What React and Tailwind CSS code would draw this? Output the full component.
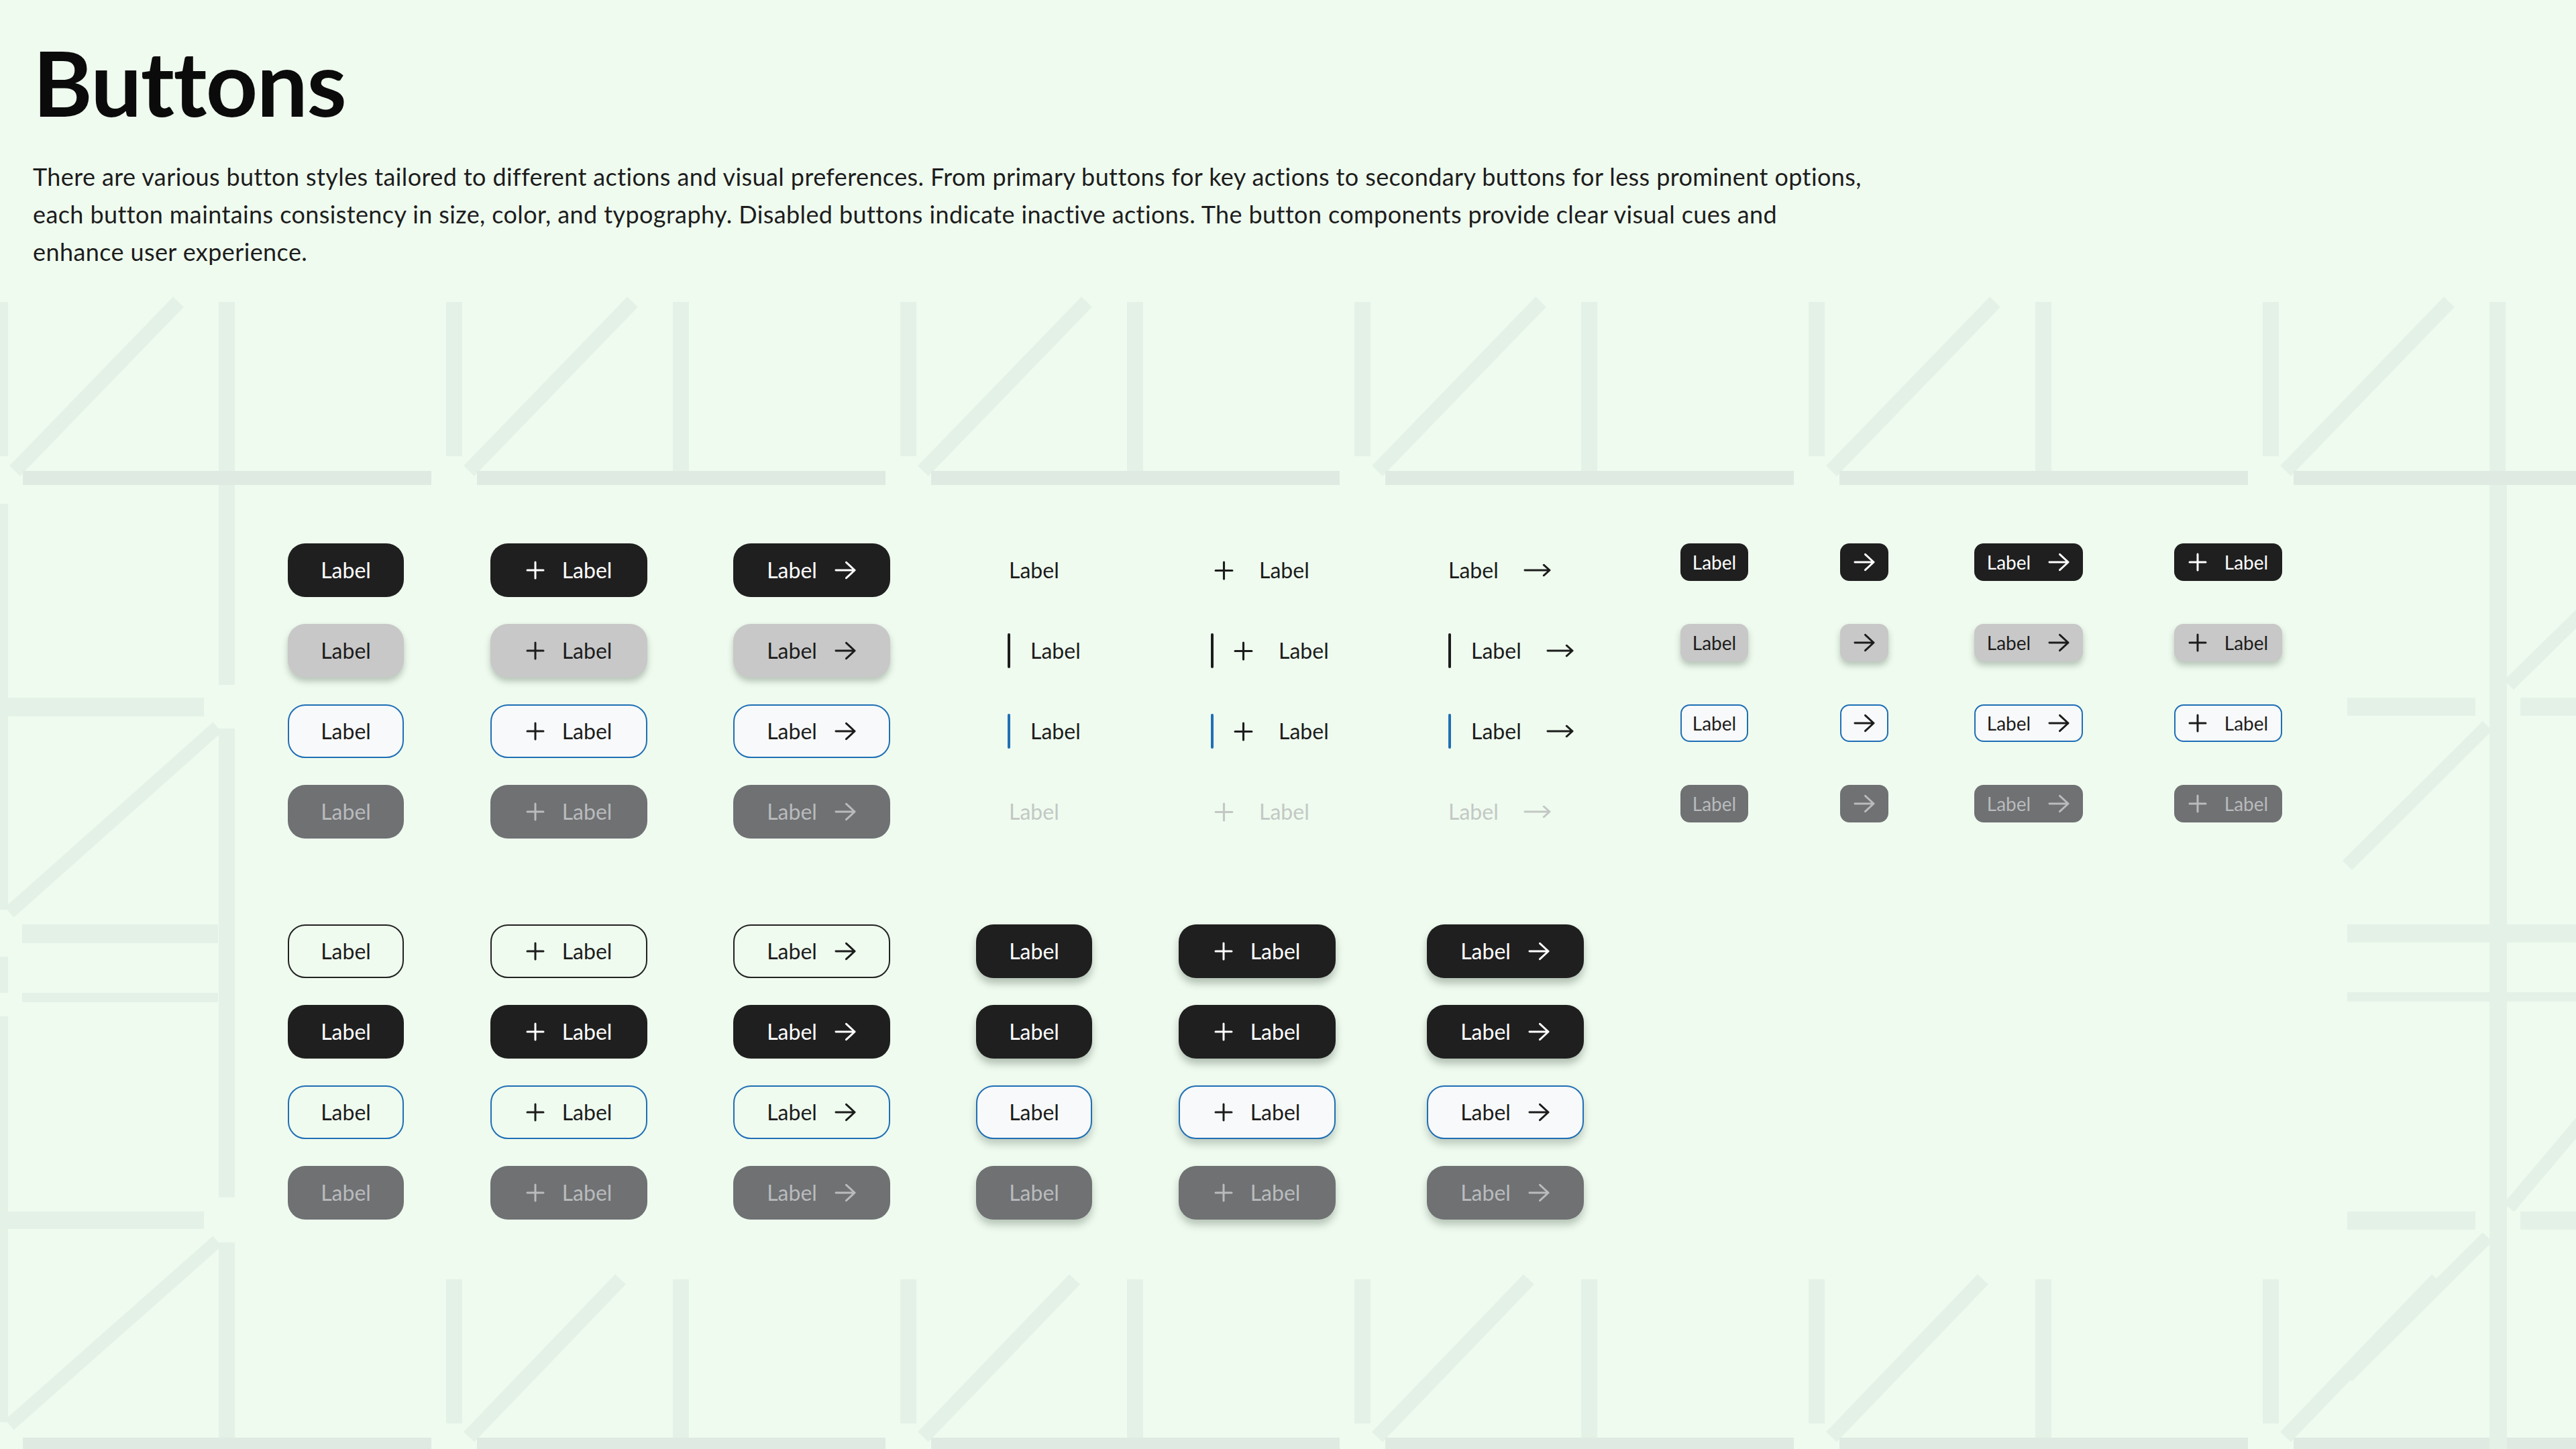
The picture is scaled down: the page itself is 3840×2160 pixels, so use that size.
import React from 'react';

const LINE = '#e4f1e6';
const BAR = '#dfebe2';

function BgPattern() {
  const tiles = [0, 1, 2, 3, 4, 5];
  return (
    <svg className="absolute inset-0" width="3840" height="2160" viewBox="0 0 3840 2160" fill="none">
      {/* top band */}
      {tiles.map(j => {
        const x0 = 677 * j;
        return (
          <g key={'t' + j}>
            <rect x={x0 - 12} y={450} width={24} height={230} fill={LINE} />
            <line x1={x0 + 22} y1={702} x2={x0 + 266} y2={450} stroke={LINE} strokeWidth={22} />
            <rect x={x0 + 326} y={450} width={24} height={252} fill={LINE} />
            <rect x={x0 + 34} y={702} width={609} height={21} fill={BAR} />
          </g>
        );
      })}
      {/* bottom band */}
      {tiles.map(j => {
        const x0 = 677 * j;
        return (
          <g key={'b' + j}>
            {j > 0 && <rect x={x0 - 12} y={1907} width={24} height={215} fill={LINE} />}
            {j > 0 && <line x1={x0 + 22} y1={2142} x2={x0 + 248} y2={1907} stroke={LINE} strokeWidth={22} />}
            {j > 0 && <rect x={x0 + 326} y={1907} width={24} height={236} fill={LINE} />}
            <rect x={x0 + 34} y={2143} width={609} height={21} fill={BAR} />
          </g>
        );
      })}
      {/* left strip */}
      <rect x={-12} y={751} width={24} height={605} fill={LINE} />
      <rect x={-12} y={1426} width={24} height={54} fill={LINE} />
      <rect x={-12} y={1515} width={24} height={605} fill={LINE} />
      <rect x={326} y={723} width={24} height={298} fill={LINE} />
      <rect x={326} y={1086} width={24} height={699} fill={LINE} />
      <rect x={326} y={1852} width={24} height={291} fill={LINE} />
      <rect x={12} y={1040} width={292} height={28} fill={LINE} />
      <line x1={14} y1={1360} x2={324} y2={1084} stroke={LINE} strokeWidth={20} />
      <rect x={33} y={1378} width={292} height={28} fill={LINE} />
      <rect x={33} y={1480} width={292} height={14} fill={LINE} />
      <rect x={12} y={1806} width={292} height={26} fill={LINE} />
      <line x1={14} y1={2124} x2={324} y2={1850} stroke={LINE} strokeWidth={20} />
      {/* right strip */}
      <rect x={3711} y={723} width={26} height={1437} fill={LINE} />
      <rect x={3499} y={1040} width={191} height={27} fill={LINE} />
      <rect x={3757} y={1040} width={83} height={27} fill={LINE} />
      <line x1={3499} y1={1290} x2={3708} y2={1082} stroke={LINE} strokeWidth={20} />
      <line x1={3740} y1={1021} x2={3850} y2={913} stroke={LINE} strokeWidth={20} />
      <rect x={3499} y={1378} width={341} height={27} fill={LINE} />
      <rect x={3499} y={1479} width={341} height={14} fill={LINE} />
      <line x1={3499} y1={2052} x2={3708} y2={1844} stroke={LINE} strokeWidth={20} />
      <line x1={3740} y1={1800} x2={3850} y2={1670} stroke={LINE} strokeWidth={20} />
      <rect x={3499} y={1806} width={191} height={27} fill={LINE} />
      <rect x={3757} y={1806} width={83} height={27} fill={LINE} />
    </svg>
  );
}

function PlusIcon({ className = '' }) {
  return (
    <svg viewBox="0 0 28 28" className={className} fill="none" stroke="currentColor" strokeWidth="3" strokeLinecap="round">
      <path d="M14 2v24M2 14h24" />
    </svg>
  );
}

function ArrowIcon({ className = '' }) {
  return (
    <svg viewBox="0 0 34 28" className={className} fill="none" stroke="currentColor" strokeWidth="3" strokeLinecap="round" strokeLinejoin="round">
      <path d="M2 14h29M18 2l13 12-13 12" />
    </svg>
  );
}

function LongArrow({ className = '' }) {
  return (
    <svg viewBox="0 0 42 24" className={className} fill="none" stroke="currentColor" strokeWidth="3" strokeLinecap="round" strokeLinejoin="round">
      <path d="M2 12h38M31 4l9 8-9 8" />
    </svg>
  );
}

const VARIANTS = {
  primary: 'bg-[#1f1f1f] text-white',
  secondary: 'bg-[#c8c8c8] text-[#1c1c1c] shadow-[0_6px_10px_rgba(20,40,25,0.25)]',
  tertiary: 'bg-[#f8f9fa] text-[#1c1c1c] border-2 border-[#1f6fb5]',
  disabled: 'bg-[#6f7173] text-[#b9bbbd]',
  outline: 'border-2 border-[#222222] text-[#1c1c1c]',
  outlineBlue: 'border-2 border-[#1f6fb5] text-[#1c1c1c]',
  primaryRaised: 'bg-[#1f1f1f] text-white shadow-[0_8px_12px_rgba(20,40,25,0.28)]',
  tertiaryRaised: 'bg-[#f8f9fa] text-[#1c1c1c] border-2 border-[#1f6fb5] shadow-[0_8px_12px_rgba(20,40,25,0.22)]',
  disabledRaised: 'bg-[#6f7173] text-[#b9bbbd] shadow-[0_8px_12px_rgba(20,40,25,0.25)]',
};

const ROWS = ['primary', 'secondary', 'tertiary', 'disabled'];
const ROWS_B = ['outline', 'primary', 'outlineBlue', 'disabled'];
const ROWS_C = ['primaryRaised', 'primaryRaised', 'tertiaryRaised', 'disabledRaised'];

function BigButton({ variant, kind }) {
  const width = kind === 'label' ? 'w-[173px]' : 'w-[234px]';
  return (
    <button className={`${width} h-[80px] shrink-0 rounded-[26px] flex items-center justify-center gap-[26px] text-[32px] ${VARIANTS[variant]}`}>
      {kind === 'plus' && <PlusIcon className="w-[28px] h-[28px]" />}
      <span>Label</span>
      {kind === 'arrow' && <ArrowIcon className="w-[33px] h-[28px]" />}
    </button>
  );
}

function SmallButton({ variant, kind }) {
  const widths = { label: 'w-[101px]', icon: 'w-[72px]', arrow: 'w-[162px]', plus: 'w-[161px]' };
  return (
    <button className={`${widths[kind]} h-[56px] shrink-0 rounded-[14px] flex items-center justify-center gap-[26px] text-[28px] ${VARIANTS[variant]}`}>
      {kind === 'plus' && <PlusIcon className="w-[28px] h-[28px]" />}
      {kind !== 'icon' && <span>Label</span>}
      {(kind === 'arrow' || kind === 'icon') && <ArrowIcon className="w-[33px] h-[28px]" />}
    </button>
  );
}

function TextButton({ kind, bar, disabled }) {
  const color = disabled ? 'text-[#c3c8c4]' : 'text-[#1c1c1c]';
  return (
    <div className={`h-[80px] flex items-center text-[32px] ${color}`}>
      {bar === 'dark' && <span className="w-[4px] h-[52px] rounded-full bg-[#1c1c1c] mr-[30px]" />}
      {bar === 'blue' && <span className="w-[4px] h-[52px] rounded-full bg-[#1f6fb5] mr-[30px]" />}
      {kind === 'plus' && <PlusIcon className="w-[29px] h-[29px] mr-[38px]" />}
      <span>Label</span>
      {kind === 'arrow' && <LongArrow className="w-[41px] h-[24px] ml-[37px]" />}
    </div>
  );
}

function Column({ width, gap = 'gap-[40px]', children }) {
  return <div className={`flex flex-col shrink-0 ${gap} ${width}`}>{children}</div>;
}

const TEXT_ROWS = [
  { bar: null, disabled: false },
  { bar: 'dark', disabled: false },
  { bar: 'blue', disabled: false },
  { bar: null, disabled: true },
];

export default function App() {
  return (
    <div className="relative w-[3840px] h-[2160px] overflow-hidden bg-[#effbef] [font-family:Lato,sans-serif]">
      <BgPattern />
      <div className="relative">
        {/* Header */}
        <header className="pl-[49px] pt-[55px]">
          <h1 className="text-[135px] leading-none font-bold text-[#0b0b0b] tracking-[-1.5px]">Buttons</h1>
          <p className="mt-[45px] text-[36px] leading-[56px] tracking-[0.4px] text-[#1d1d1d]">
            There are various button styles tailored to different actions and visual preferences. From primary buttons for key actions to secondary buttons for less prominent options,
            <br />
            each button maintains consistency in size, color, and typography. Disabled buttons indicate inactive actions. The button components provide clear visual cues and
            <br />
            enhance user experience.
          </p>
        </header>

        <div className="pl-[429px] mt-[407px] flex flex-col gap-[128px]">
          {/* First set */}
          <div className="flex items-start">
            <Column width="w-[302px]">
              {ROWS.map(v => <BigButton key={v} variant={v} kind="label" />)}
            </Column>
            <Column width="w-[362px]">
              {ROWS.map(v => <BigButton key={v} variant={v} kind="plus" />)}
            </Column>
            <Column width="w-[409px]">
              {ROWS.map(v => <BigButton key={v} variant={v} kind="arrow" />)}
            </Column>
            <Column width="w-[303px]">
              {TEXT_ROWS.map((r, i) => (
                <div key={i} className={r.bar ? '' : 'pl-[2px]'}>
                  <TextButton kind="label" bar={r.bar} disabled={r.disabled} />
                </div>
              ))}
            </Column>
            <Column width="w-[354px]">
              {TEXT_ROWS.map((r, i) => (
                <div key={i} className={r.bar ? '' : 'pl-[5px]'}>
                  <TextButton kind="plus" bar={r.bar} disabled={r.disabled} />
                </div>
              ))}
            </Column>
            <Column width="w-[346px]">
              {TEXT_ROWS.map((r, i) => (
                <TextButton key={i} kind="arrow" bar={r.bar} disabled={r.disabled} />
              ))}
            </Column>
            <Column width="w-[238px]" gap="gap-[64px]">
              {ROWS.map(v => <SmallButton key={v} variant={v} kind="label" />)}
            </Column>
            <Column width="w-[200px]" gap="gap-[64px]">
              {ROWS.map(v => <SmallButton key={v} variant={v} kind="icon" />)}
            </Column>
            <Column width="w-[298px]" gap="gap-[64px]">
              {ROWS.map(v => <SmallButton key={v} variant={v} kind="arrow" />)}
            </Column>
            <Column width="w-[161px]" gap="gap-[64px]">
              {ROWS.map(v => <SmallButton key={v} variant={v} kind="plus" />)}
            </Column>
          </div>

          {/* Second set */}
          <div className="flex items-start">
            <Column width="w-[302px]">
              {ROWS_B.map((v, i) => <BigButton key={i} variant={v} kind="label" />)}
            </Column>
            <Column width="w-[362px]">
              {ROWS_B.map((v, i) => <BigButton key={i} variant={v} kind="plus" />)}
            </Column>
            <Column width="w-[362px]">
              {ROWS_B.map((v, i) => <BigButton key={i} variant={v} kind="arrow" />)}
            </Column>
            <Column width="w-[302px]">
              {ROWS_C.map((v, i) => <BigButton key={i} variant={v} kind="label" />)}
            </Column>
            <Column width="w-[370px]">
              {ROWS_C.map((v, i) => <BigButton key={i} variant={v} kind="plus" />)}
            </Column>
            <Column width="w-[234px]">
              {ROWS_C.map((v, i) => <BigButton key={i} variant={v} kind="arrow" />)}
            </Column>
          </div>
        </div>
      </div>
    </div>
  );
}
